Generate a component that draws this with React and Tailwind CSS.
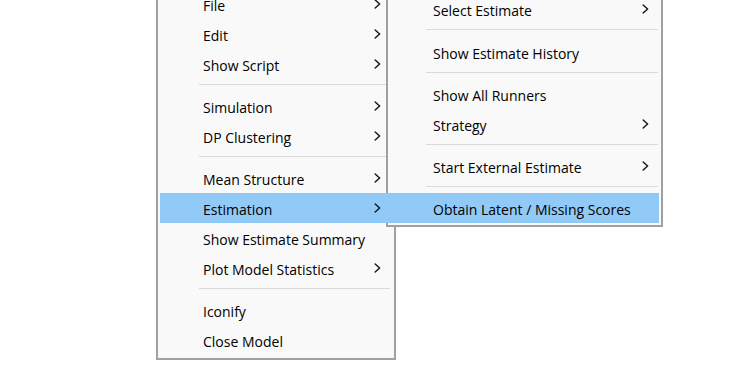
import React from "react";

const mainItems = [
  { label: "File", sub: true },
  { label: "Edit", sub: true },
  { label: "Show Script", sub: true },
  { sep: true },
  { label: "Simulation", sub: true },
  { label: "DP Clustering", sub: true },
  { sep: true },
  { label: "Mean Structure", sub: true },
  { label: "Estimation", sub: true, active: true },
  { label: "Show Estimate Summary" },
  { label: "Plot Model Statistics", sub: true },
  { sep: true },
  { label: "Iconify" },
  { label: "Close Model" },
];

const estimationItems = [
  { label: "Select Estimate", sub: true },
  { sep: true, tall: true },
  { label: "Show Estimate History" },
  { sep: true },
  { label: "Show All Runners" },
  { label: "Strategy", sub: true },
  { sep: true },
  { label: "Start External Estimate", sub: true },
  { sep: true },
  { label: "Obtain Latent / Missing Scores", active: true },
];

function Chevron() {
  return (
    <svg width="7" height="10" viewBox="0 0 7 10" className="shrink-0">
      <polyline
        points="1.2,1 5.6,5 1.2,9"
        fill="none"
        stroke="#1a1a1a"
        strokeWidth="1.5"
        strokeLinecap="round"
        strokeLinejoin="round"
      />
    </svg>
  );
}

export default function App() {
  return (
    <div
      className="relative w-[746px] h-[372px] overflow-hidden bg-white text-[14px] text-black"
      style={{ fontFamily: '"Open Sans", "Noto Sans", sans-serif' }}
    >
      {/* main context menu */}
      <div className="absolute left-[156px] top-[-15px] w-[240px] border-2 border-[#a0a0a0] bg-[#f9f9f9] pt-[2px] pb-[3px] px-[2px]">
        {mainItems.map((item, i) =>
          item.sep ? (
            <div key={i} className="h-[12px] pt-[5px] ml-[39px] mr-[2px]">
              <div className="h-px bg-[#d9d9d9]" />
            </div>
          ) : (
            <div
              key={i}
              className={
                "flex h-[30px] items-center justify-between pl-[43px] pr-[11px] " +
                (item.active ? "bg-[#91c9f7]" : "")
              }
            >
              <span className="whitespace-nowrap pt-[3px]">{item.label}</span>
              {item.sub && <Chevron />}
            </div>
          )
        )}
      </div>

      {/* Estimation submenu */}
      <div className="absolute left-[386px] top-[-10px] w-[277px] border-2 border-[#a0a0a0] bg-[#f9f9f9] p-[2px]">
        {estimationItems.map((item, i) =>
          item.sep ? (
            <div
              key={i}
              className={(item.tall ? "h-[13px]" : "h-[12px]") + " pt-[5px] ml-[36px] mr-[1px]"}
            >
              <div className="h-px bg-[#d9d9d9]" />
            </div>
          ) : item.active ? (
            <div
              key={i}
              className="relative -ml-[4px] flex h-[30px] items-center bg-[#91c9f7] pl-[47px]"
            >
              <span className="whitespace-nowrap pt-[3px]">{item.label}</span>
            </div>
          ) : (
            <div
              key={i}
              className="flex h-[30px] items-center justify-between pl-[43px] pr-[10px]"
            >
              <span className="whitespace-nowrap pt-[3px]">{item.label}</span>
              {item.sub && <Chevron />}
            </div>
          )
        )}
      </div>
    </div>
  );
}
